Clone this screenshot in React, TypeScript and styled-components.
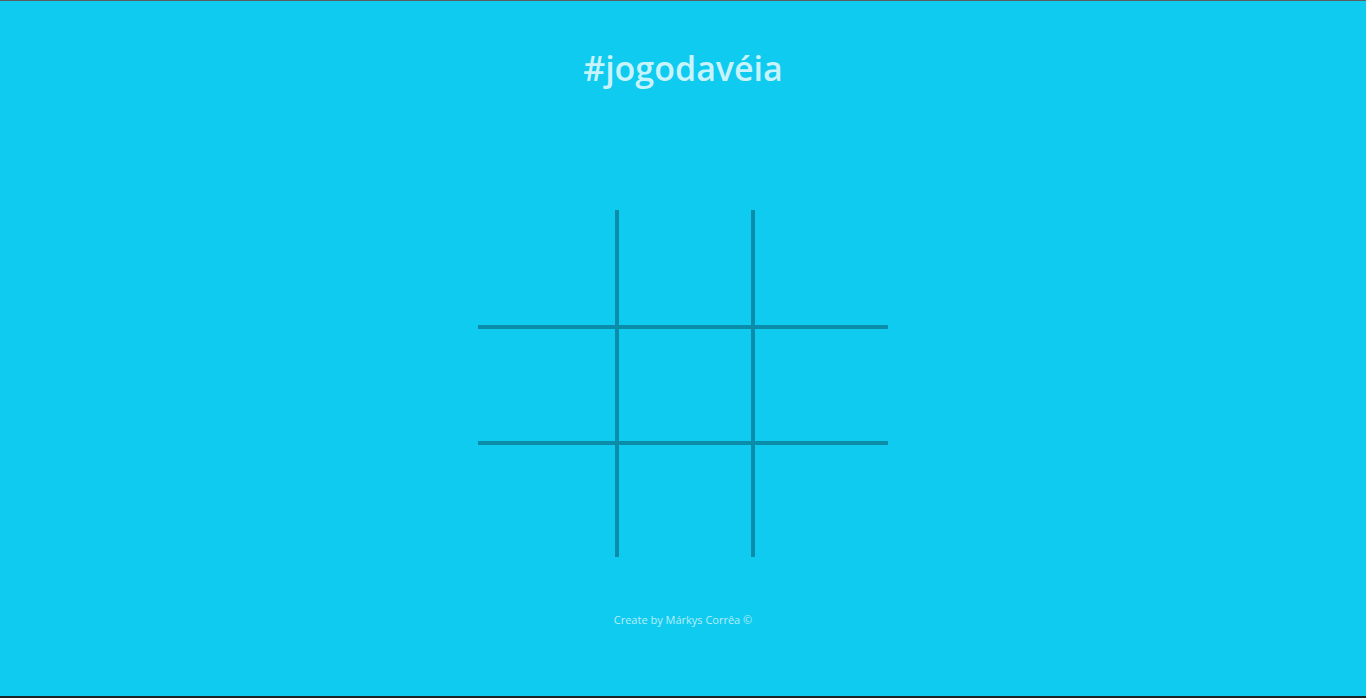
import React from "react";
import styled, { createGlobalStyle } from "styled-components";

const Global = createGlobalStyle`
  html, body { margin: 0; padding: 0; background: #0fcbf0; }
  * { box-sizing: border-box; }
`;

const Page = styled.div`
  height: 698px;
  display: flex;
  flex-direction: column;
  align-items: center;
  background: #0fcbf0;
  border-top: 1px solid #5a5e60;
  border-bottom: 2px solid #1c2526;
  font-family: "Open Sans", "Noto Sans", sans-serif;
`;

const Title = styled.h1`
  margin: 44px 0 0;
  font-size: 34px;
  line-height: 46px;
  font-weight: 600;
  color: #c9f3fc;
  letter-spacing: 0;
`;

const Board = styled.div`
  margin-top: 119px;
  display: grid;
  grid-template-columns: 141px 136px 133px;
  grid-template-rows: 119px 116px 112px;
`;

const Cell = styled.div<{ $right: boolean; $bottom: boolean }>`
  border-right: ${(p) => (p.$right ? "4px solid #0b8ca8" : "none")};
  border-bottom: ${(p) => (p.$bottom ? "4px solid #0b8ca8" : "none")};
`;

const Footer = styled.p`
  margin: 55px 0 0;
  font-size: 11px;
  line-height: 16px;
  color: #b8eefa;
`;

export default function App() {
  const cells = Array.from({ length: 9 }, (_, i) => i);
  return (
    <>
      <Global />
      <Page>
        <Title>#jogodavéia</Title>
        <Board>
          {cells.map((i) => (
            <Cell key={i} $right={i % 3 !== 2} $bottom={i < 6} />
          ))}
        </Board>
        <Footer>Create by Márkys Corrêa ©</Footer>
      </Page>
    </>
  );
}
